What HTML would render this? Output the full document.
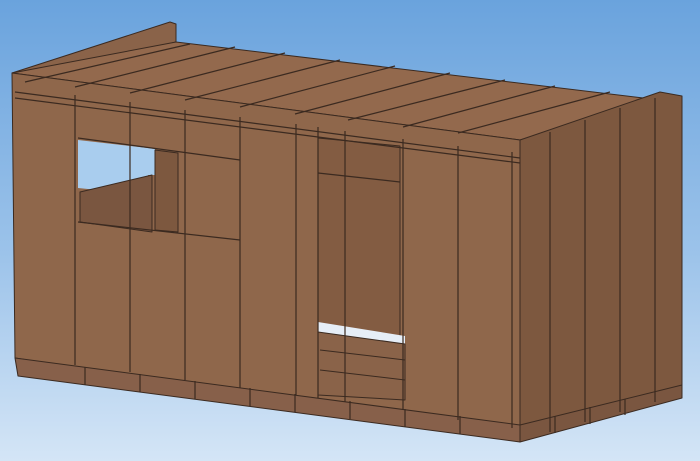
<!DOCTYPE html>
<html><head><style>
html,body{margin:0;padding:0;width:700px;height:461px;overflow:hidden}
body{background:linear-gradient(#6aa3dd 0%,#9cc3ea 55%,#d4e5f6 100%)}
</style></head><body>
<svg width="700" height="461" viewBox="0 0 700 461" xmlns="http://www.w3.org/2000/svg">
<g stroke="#3b2a20" stroke-width="1" stroke-linejoin="round">
<!-- back parapet -->
<polygon points="12,73 170,22 176,24 176,42 20,82" fill="#8a6349"/>
<!-- roof top -->
<polygon points="12,73 176,42 660,100 520,140" fill="#93694d"/>
<!-- right wall -->
<polygon points="520,140 660,92 682,96 682,395 520,440" fill="#7d583f"/>
<!-- front wall -->
<polygon points="12,73 520,140 520,440 15,358" fill="#8f674b"/>
<!-- window hole -->
<polygon points="78,140 148,148 148,195 78,188" fill="#a9cdee" stroke="none"/>
<polygon points="148,148 155,149 155,175 148,175" fill="#a9cdee" stroke="none"/>
<!-- interior behind window -->
<polygon points="80,192 152,175 152,232 80,222" fill="#7a5640"/>
<polygon points="155,150 178,153 178,232 155,230" fill="#7d583f"/>
<!-- door opening -->
<polygon points="318,138 400,146 400,340 318,330" fill="#835c42"/>
<polygon points="318,322 405,336 405,344 318,332" fill="#e6eef7" stroke="none"/>
<polygon points="318,332 405,344 405,400 318,395" fill="#8a6349"/>
<line x1="320" y1="350" x2="405" y2="360"/><line x1="320" y1="370" x2="405" y2="380"/>
<!-- bottom rails -->
<polygon points="15,358 520,425 520,442 18,376" fill="#87604a"/>
<polygon points="520,425 682,385 682,398 520,442" fill="#7a5640"/>
</g>
<g stroke="#3b2a20" stroke-width="1.2" fill="none">
<!-- roof plank lines -->
<line x1="25" y1="82" x2="190" y2="44"/>
<line x1="75" y1="87" x2="235" y2="47"/>
<line x1="130" y1="93" x2="285" y2="53"/>
<line x1="185" y1="100" x2="340" y2="60"/>
<line x1="240" y1="107" x2="395" y2="66"/>
<line x1="295" y1="114" x2="450" y2="73"/>
<line x1="348" y1="120" x2="505" y2="80"/>
<line x1="403" y1="127" x2="555" y2="86"/>
<line x1="458" y1="133" x2="610" y2="92"/>
<!-- front beams -->
<line x1="15" y1="92" x2="520" y2="158"/>
<line x1="15" y1="98" x2="520" y2="163"/>
<line x1="78" y1="138" x2="240" y2="160"/>
<line x1="318" y1="173" x2="400" y2="182"/>
<!-- front vertical planks -->
<line x1="75" y1="95" x2="75" y2="365"/>
<line x1="130" y1="102" x2="130" y2="372"/>
<line x1="185" y1="110" x2="185" y2="380"/>
<line x1="240" y1="117" x2="240" y2="388"/>
<line x1="296" y1="124" x2="296" y2="395"/>
<line x1="318" y1="127" x2="318" y2="398"/>
<line x1="345" y1="131" x2="345" y2="402"/>
<line x1="403" y1="139" x2="403" y2="410"/>
<line x1="458" y1="146" x2="458" y2="420"/>
<line x1="512" y1="152" x2="512" y2="428"/>
<line x1="78" y1="222" x2="240" y2="240"/>
<!-- right wall planks -->
<line x1="550" y1="132" x2="550" y2="432"/>
<line x1="585" y1="120" x2="585" y2="422"/>
<line x1="620" y1="108" x2="620" y2="412"/>
<line x1="655" y1="98" x2="655" y2="402"/>
<!-- rail segments -->
<line x1="85" y1="367" x2="85" y2="385"/><line x1="140" y1="374" x2="140" y2="392"/>
<line x1="195" y1="381" x2="195" y2="399"/><line x1="250" y1="388" x2="250" y2="406"/>
<line x1="295" y1="394" x2="295" y2="412"/><line x1="350" y1="401" x2="350" y2="419"/>
<line x1="405" y1="409" x2="405" y2="427"/><line x1="460" y1="416" x2="460" y2="434"/>
<line x1="555" y1="416" x2="555" y2="433"/><line x1="590" y1="407" x2="590" y2="424"/>
<line x1="625" y1="399" x2="625" y2="415"/>
</g>
</svg>
</body></html>
